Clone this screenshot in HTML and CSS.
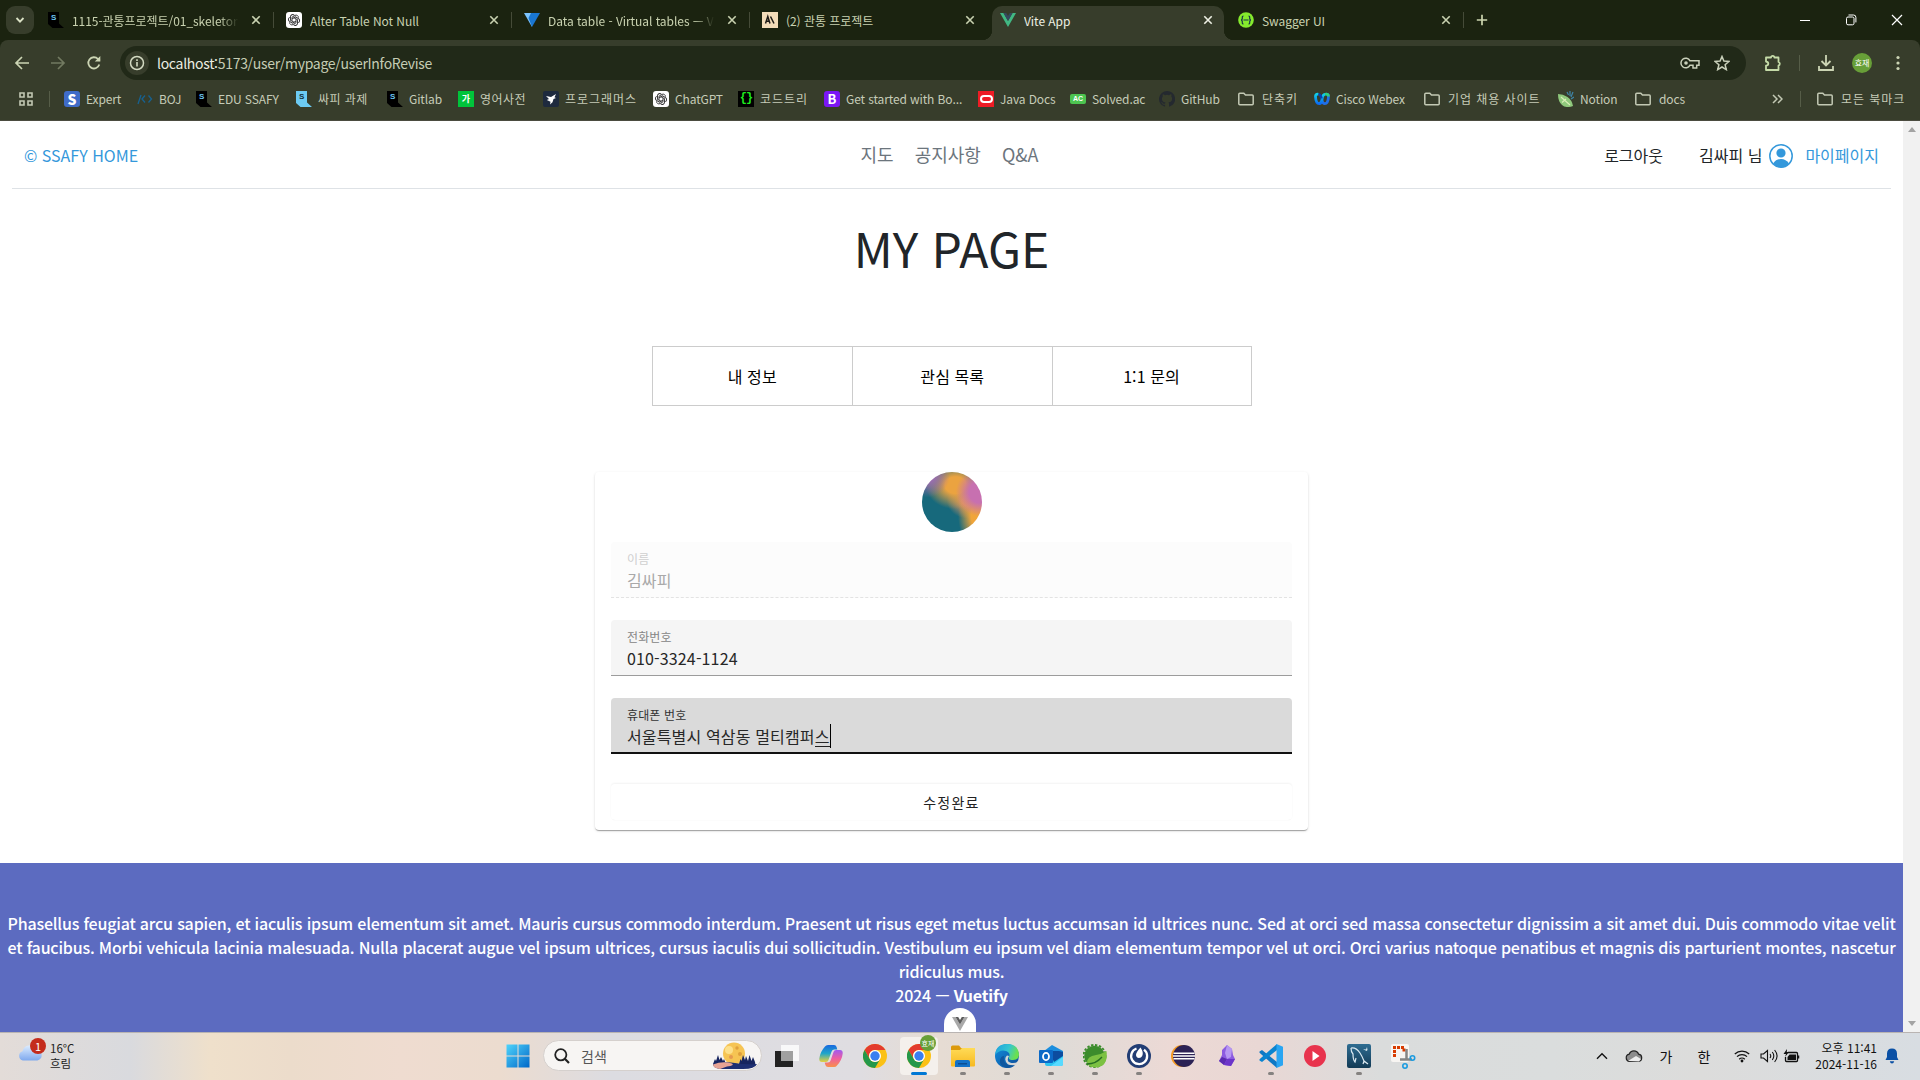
FILE: index.html
```html
<!DOCTYPE html>
<html lang="ko">
<head>
<meta charset="utf-8">
<title>Vite App</title>
<link rel="stylesheet" href="styles.css">
</head>
<body>
<svg class="defs" width="0" height="0">
  <defs>
    <linearGradient id="gWin" x1="0" y1="0" x2="1" y2="1"><stop offset="0" stop-color="#4fd4fb"/><stop offset="1" stop-color="#0067c8"/></linearGradient>
    <linearGradient id="gEdge" x1="0" y1="0" x2="1" y2="0.3"><stop offset="0" stop-color="#1f9fe0"/><stop offset="0.6" stop-color="#35c6d0"/><stop offset="1" stop-color="#6be04f"/></linearGradient>
    <linearGradient id="gEdge2" x1="0" y1="0" x2="1" y2="1"><stop offset="0" stop-color="#1290e0"/><stop offset="1" stop-color="#0c4a96"/></linearGradient>
    <linearGradient id="gCopA" x1="0" y1="0" x2="0" y2="1"><stop offset="0" stop-color="#1768e0"/><stop offset="0.5" stop-color="#20a6c8"/><stop offset="1" stop-color="#e8d03c"/></linearGradient>
    <linearGradient id="gCopB" x1="0" y1="0" x2="0" y2="1"><stop offset="0" stop-color="#a05af0"/><stop offset="0.5" stop-color="#ee5fa0"/><stop offset="1" stop-color="#f9904a"/></linearGradient>
    <linearGradient id="gFold" x1="0" y1="0" x2="0" y2="1"><stop offset="0" stop-color="#ffdb57"/><stop offset="1" stop-color="#f7b921"/></linearGradient>
    <linearGradient id="gSql" x1="0" y1="0" x2="0" y2="1"><stop offset="0" stop-color="#2f6d92"/><stop offset="1" stop-color="#123a55"/></linearGradient>
    <linearGradient id="gCloud" x1="0" y1="0" x2="0" y2="1"><stop offset="0" stop-color="#dcecff"/><stop offset="1" stop-color="#7fa9ee"/></linearGradient>
    <linearGradient id="gWebex" x1="0" y1="0" x2="0" y2="1"><stop offset="0" stop-color="#10d0e8"/><stop offset="1" stop-color="#0a6cf5"/></linearGradient>
    <symbol id="x" viewBox="0 0 10 10"><path d="M1.3 1.3l7.4 7.4M8.7 1.3L1.3 8.7" stroke="currentColor" stroke-width="1.6" fill="none"/></symbol>
    <symbol id="ssafy" viewBox="0 0 16 16"><path d="M0 0h11v11.5L16 16H4.5L0 12z" fill="currentColor"/></symbol>
    <symbol id="gpt" viewBox="0 0 16 16"><rect width="16" height="16" rx="3" fill="#fff"/><g fill="none" stroke="#333" stroke-width="0.95"><path id="petal" d="M6 8.9V5.2L9 3.4a2.3 2.3 0 0 1 3.4 2.3"/><use href="#petal" transform="rotate(60 8 8)"/><use href="#petal" transform="rotate(120 8 8)"/><use href="#petal" transform="rotate(180 8 8)"/><use href="#petal" transform="rotate(240 8 8)"/><use href="#petal" transform="rotate(300 8 8)"/></g></symbol>
    <symbol id="folder" viewBox="0 0 16 16"><path d="M.8 3.2q0-1 1-1h4l1.7 1.9h6.700q1 0 1 1v7.700q0 1-1 1H1.800q-1 0-1-1z" fill="none" stroke="#c3c9b4" stroke-width="1.5"/></symbol>
    <symbol id="chrome" viewBox="0 0 24 24"><circle cx="12" cy="12" r="12" fill="#fbc116"/><path d="M1.600 6A12 12 0 0 1 22.400 6H12A6 6 0 0 0 6.800 15z" fill="#e33b2e"/><path d="M1.600 6A12 12 0 0 0 12 24L17.200 15A6 6 0 0 1 6.800 15z" fill="#24984a"/><circle cx="12" cy="12" r="6" fill="#fff"/><circle cx="12" cy="12" r="4.700" fill="#3a7ff0"/></symbol>
  </defs>
</svg>

<header class="browser">
  <div class="tabstrip">
    <button class="tab-search"><svg width="10" height="8" viewBox="0 0 10 8"><path d="M1.500 2l3.500 3.600L8.500 2" fill="none" stroke="#dbe2c6" stroke-width="1.800"/></svg></button>
    <div class="tab"><i class="fav ssafy dark"><svg><use href="#ssafy"/></svg><b>S</b></i><span class="ttl fade">1115-관통프로젝트/01_skeleton</span><svg class="x"><use href="#x"/></svg></div>
    <div class="tab"><svg class="fav"><use href="#gpt"/></svg><span class="ttl">Alter Table Not Null</span><svg class="x"><use href="#x"/></svg></div>
    <div class="tab"><svg class="fav" viewBox="0 0 16 16"><path d="M0 1h8v14z" fill="#7cc4ff"/><path d="M16 1H7l-2.500 5L8 15z" fill="#1976d2"/></svg><span class="ttl fade">Data table - Virtual tables — V</span><svg class="x"><use href="#x"/></svg></div>
    <div class="tab last"><i class="fav sand"><svg viewBox="0 0 16 16"><path d="M3.500 11.500L5.800 4.500l2.200 7M4.500 9.200h3M8.500 4.500l3.500 7" fill="none" stroke="#1d1a16" stroke-width="1.500"/></svg></i><span class="ttl">(2) 관통 프로젝트</span><svg class="x"><use href="#x"/></svg></div>
    <div class="tab active"><svg class="fav" viewBox="0 0 16 16"><path d="M0 1h3.500L8 9l4.500-8H16L8 15z" fill="#41b883"/><path d="M3.500 1h2.700L8 4l1.800-3h2.700L8 9z" fill="#35495e"/></svg><span class="ttl">Vite App</span><svg class="x"><use href="#x"/></svg></div>
    <div class="tab"><svg class="fav" viewBox="0 0 16 16"><circle cx="8" cy="8" r="7.800" fill="#85ea2d"/><path d="M5.500 4q-1.300 0-1.200 1.500Q4.400 8 3 8q1.400 0 1.300 2.500Q4.200 12 5.500 12M10.500 4q1.300 0 1.200 1.500Q11.600 8 13 8q-1.400 0-1.300 2.500.1 1.500-1.200 1.500M5.500 8h5" fill="none" stroke="#173647" stroke-width="1.200"/></svg><span class="ttl">Swagger UI</span><svg class="x"><use href="#x"/></svg></div>
    <svg class="plus" width="12" height="12" viewBox="0 0 12 12"><path d="M6 .8v10.400M.8 6h10.400" stroke="#ccd5ae" stroke-width="1.700"/></svg>
    <div class="winctl">
      <svg width="12" height="12" viewBox="0 0 12 12"><path d="M1 6.500h10" stroke="#fff"/></svg>
      <svg width="12" height="12" viewBox="0 0 12 12"><rect x="1.500" y="3" width="7.500" height="7.800" rx="1.500" fill="none" stroke="#fff"/><path d="M3.500 1h5q2.400 0 2.400 2.400v5" fill="none" stroke="#fff"/></svg>
      <svg width="12" height="12" viewBox="0 0 12 12"><path d="M1 1l10 10M11 1L1 11" stroke="#fff" stroke-width="1.200"/></svg>
    </div>
  </div>

  <div class="toolbar">
    <div class="nav-btns">
      <svg width="16" height="16" viewBox="0 0 16 16"><path d="M15 8H2.500M8 2L2 8l6 6" fill="none" stroke="#ccd5b4" stroke-width="1.700"/></svg>
      <svg width="16" height="16" viewBox="0 0 16 16"><path d="M1 8h12.500M8 2l6 6-6 6" fill="none" stroke="#727a61" stroke-width="1.700"/></svg>
      <svg width="16" height="16" viewBox="0 0 16 16"><path d="M13.300 9.500A5.600 5.600 0 1 1 12 4L13.700 5.700" fill="none" stroke="#ccd5b4" stroke-width="1.800"/><path d="M14.300 1v5.500H8.800z" fill="#ccd5b4"/></svg>
    </div>
    <div class="omnibox">
      <i class="info"><svg width="16" height="16" viewBox="0 0 16 16"><circle cx="8" cy="8" r="6.500" fill="none" stroke="#d3dac2" stroke-width="1.500"/><path d="M8 7v4.500M8 4.300v1.600" stroke="#d3dac2" stroke-width="1.600"/></svg></i>
      <span class="url"><b>localhost:</b>5173/user/mypage/userInfoRevise</span>
      <svg class="key" width="20" height="14" viewBox="0 0 20 14"><path d="M10 4.800A4.800 4.800 0 1 0 10 9.200h3V12h3.700V9.200H19V4.800z" fill="none" stroke="#c9d0ba" stroke-width="1.500"/><circle cx="6" cy="7" r="1.800" fill="#c9d0ba"/></svg>
      <svg width="16" height="16" viewBox="0 0 16 16"><path d="M8 1.500l1.900 4.600 5 .4-3.800 3.200 1.200 4.900L8 12l-4.300 2.600 1.200-4.900L1.100 6.500l5-.4z" fill="none" stroke="#c9d0ba" stroke-width="1.500"/></svg>
    </div>
    <svg class="puzzle" width="18" height="18" viewBox="0 0 18 18"><path d="M2 3.500h5a1.700 1.700 0 0 1 3.400 0H14.500V8a1.900 1.900 0 0 1 0 3.600V16H2v-4.300q2.300-.3 2.300-2T2 7.500z" fill="none" stroke="#c5dba8" stroke-width="1.800" stroke-linejoin="round"/></svg>
    <i class="bar"></i>
    <svg class="dl" width="16" height="18" viewBox="0 0 16 18"><path d="M8 1v10M3.500 7L8 11.500 12.500 7M1 12v4h14v-4" fill="none" stroke="#ccd5b4" stroke-width="1.800"/></svg>
    <span class="profile">효재</span>
    <svg class="dots" width="4" height="16" viewBox="0 0 4 16"><g fill="#ccd5b4"><circle cx="2" cy="2.500" r="1.600"/><circle cx="2" cy="8" r="1.600"/><circle cx="2" cy="13.500" r="1.600"/></g></svg>
  </div>

  <nav class="bookmarks">
    <svg width="14" height="14" viewBox="0 0 14 14"><path d="M1 1h4v4H1zM9 1h4v4H9zM1 9h4v4H1zM9 9h4v4H9z" fill="none" stroke="#c3c9b4" stroke-width="1.600"/></svg>
    <i class="bar"></i>
    <a><i class="ic blue">S</i>Expert</a>
    <a><svg class="ic" viewBox="0 0 16 16"><path d="M4 4L1 13M8 4.500L5 8l3 3.500M11.500 4.500l3 3.500-3 3.500" fill="none" stroke="#17618f" stroke-width="1.300"/></svg>BOJ</a>
    <a><i class="ic ssafy dark"><svg><use href="#ssafy"/></svg><b>S</b></i>EDU SSAFY</a>
    <a class="ko"><i class="ic ssafy light"><svg><use href="#ssafy"/></svg><b>S</b></i>싸피 과제</a>
    <a><i class="ic ssafy dark"><svg><use href="#ssafy"/></svg><b>S</b></i>Gitlab</a>
    <a class="ko"><i class="ic green">가</i>영어사전</a>
    <a class="ko wide"><svg class="ic" viewBox="0 0 16 16"><rect width="16" height="16" rx="2" fill="#1e2a3e"/><path d="M3 5l5 1 5-3-1.500 3.200 1.500.8-2.500 1-1 3.200L7 13.500l.5-2.700L3.800 9 6 8z" fill="#fff"/></svg>프로그래머스</a>
    <a><svg class="ic"><use href="#gpt"/></svg>ChatGPT</a>
    <a class="ko wide"><i class="ic code">{}</i>코드트리</a>
    <a><i class="ic boot">B</i>Get started with Bo...</a>
    <a><i class="ic java"><u></u></i>Java Docs</a>
    <a><i class="ic"><em>AC</em></i>Solved.ac</a>
    <a><svg class="ic" viewBox="0 0 16 16"><path fill="#24292f" d="M8 0a8 8 0 0 0-2.530 15.590c.4.070.550-.17.550-.38v-1.490c-2.230.48-2.700-.94-2.700-.94-.36-.93-.89-1.170-.89-1.170-.73-.5.050-.49.050-.49.810.06 1.230.83 1.230.83.720 1.230 1.890.87 2.350.67.070-.52.280-.87.510-1.070-1.780-.2-3.640-.89-3.640-3.950 0-.88.310-1.590.820-2.150-.08-.2-.36-1.020.080-2.120 0 0 .67-.22 2.200.82a7.500 7.500 0 0 1 4 0c1.530-1.040 2.200-.82 2.200-.82.440 1.100.160 1.920.080 2.120.510.560.820 1.270.820 2.150 0 3.070-1.870 3.750-3.650 3.950.290.250.540.730.540 1.480v2.200c0 .21.150.46.550.38A8 8 0 0 0 8 0z"/></svg>GitHub</a>
    <a class="fo ko wide"><svg class="ic"><use href="#folder"/></svg>단축키</a>
    <a><svg class="ic" viewBox="0 0 16 16"><path d="M11.500 3.300q3-.8 3 2.200-.3 7-3.700 7.200-2 0-2.800-3.200" fill="none" stroke="#1f6fe8" stroke-width="2.800"/><path d="M11 3.300q3.400-1 3.500 2.200" fill="none" stroke="#2fd07a" stroke-width="2.800"/><path d="M4.500 3.300q-3.200-.5-3 2.200.3 7 3.700 7.200Q7.500 12.500 8 8.500 8.500 3.500 11 3.300" fill="none" stroke="url(#gWebex)" stroke-width="2.800"/><path d="M4.500 3.300q2 .2 3 4.200" fill="none" stroke="#0a3fb0" stroke-width="2.600"/></svg>Cisco Webex</a>
    <a class="fo ko wide"><svg class="ic"><use href="#folder"/></svg>기업 채용 사이트</a>
    <a><svg class="ic" viewBox="0 0 16 16"><path d="M0 3q5 0 9.500 3t5.500 9q-7 2.500-11-1T0 3z" fill="#8fc97c"/><path d="M3 6l9 8M4 11.500l4-3.500" stroke="#d9efb8" stroke-width="1.100" fill="none"/><path d="M9 1l1.500 3M12 0v5M15 1l-2 5M16 6l-3 2" stroke="#3f86a8" stroke-width="1.200"/></svg>Notion</a>
    <a class="fo"><svg class="ic"><use href="#folder"/></svg>docs</a>
    <svg width="11" height="10" viewBox="0 0 11 10"><path d="M1 1l4 4-4 4M6 1l4 4-4 4" fill="none" stroke="#c3c9b4" stroke-width="1.500"/></svg>
    <i class="bar"></i>
    <a class="fo ko wide"><svg class="ic"><use href="#folder"/></svg>모든 북마크</a>
  </nav>
</header>

<div class="viewport">
  <div class="page">
    <div class="site-head">
      <a class="brand">© SSAFY HOME</a>
      <nav class="menu"><a>지도</a><a>공지사항</a><a>Q&amp;A</a></nav>
      <div class="user">
        <span class="logout">로그아웃</span><span>김싸피 님</span>
        <svg width="24" height="24" viewBox="0 0 24 24"><circle cx="12" cy="12" r="11.200" fill="#fff" stroke="#3498db" stroke-width="1.500"/><circle cx="12" cy="9" r="4.600" fill="#3498db"/><path d="M4 19.500q3-4.500 8-4.500t8 4.500Q17 23.500 12 23.500t-8-4z" fill="#3498db"/></svg>
        <a>마이페이지</a>
      </div>
    </div>
    <h1>MY PAGE</h1>
    <div class="btn-group"><button>내 정보</button><button>관심 목록</button><button>1:1 문의</button></div>
    <form class="card">
      <div class="avatar"></div>
      <label class="field disabled"><small>이름</small><span>김싸피</span></label>
      <label class="field"><small>전화번호</small><span>010-3324-1124</span></label>
      <label class="field focus"><small>휴대폰 번호</small><span>서울특별시 역삼동 멀티캠퍼<u>스</u><i class="caret"></i></span></label>
      <button class="submit">수정완료</button>
    </form>
    <footer>
      <p>Phasellus feugiat arcu sapien, et iaculis ipsum elementum sit amet. Mauris cursus commodo interdum. Praesent ut risus eget metus luctus accumsan id ultrices nunc. Sed at orci sed massa consectetur dignissim a sit amet dui. Duis commodo vitae velit<br>et faucibus. Morbi vehicula lacinia malesuada. Nulla placerat augue vel ipsum ultrices, cursus iaculis dui sollicitudin. Vestibulum eu ipsum vel diam elementum tempor vel ut orci. Orci varius natoque penatibus et magnis dis parturient montes, nascetur<br>ridiculus mus.</p>
      <p>2024 — <strong>Vuetify</strong></p>
      <div class="devtools"><svg width="16" height="14" viewBox="0 0 16 14"><path d="M0 0h3.500L8 7.500 12.500 0H16L8 14z" fill="#a9a9a9"/><path d="M3.500 0h2.700L8 3l1.800-3h2.700L8 7.500z" fill="#5c5c5c"/></svg></div>
    </footer>
  </div>
  <div class="scrollbar">
    <svg width="8" height="5" viewBox="0 0 8 5"><path d="M0 5l4-5 4 5z" fill="#a3a3a3"/></svg>
    <svg width="8" height="5" viewBox="0 0 8 5"><path d="M0 0l4 5 4-5z" fill="#a3a3a3"/></svg>
  </div>
</div>

<div class="taskbar">
  <div class="weather">
    <div class="cloud"><svg width="25" height="18" viewBox="0 0 25 18"><path d="M5 17.500a4.800 4.800 0 0 1-.5-9.300A7.500 7.500 0 0 1 18.500 6.500a5.600 5.600 0 0 1 1 11z" fill="url(#gCloud)"/></svg><b>1</b></div>
    <div class="wtext"><span>16°C</span><span>흐림</span></div>
  </div>
  <div class="apps">
    <div class="app"><svg width="24" height="24" viewBox="0 0 24 24"><path d="M.5.500h11v11H.5zM12.500.500h11v11h-11zM.5 12.500h11v11H.5zM12.500 12.500h11v11h-11z" fill="url(#gWin)"/></svg></div>
    <div class="search">
      <svg width="16" height="16" viewBox="0 0 16 16"><circle cx="6.800" cy="6.800" r="5.600" fill="none" stroke="#222" stroke-width="1.800"/><path d="M10.800 10.800L15 15" stroke="#222" stroke-width="2.200"/></svg>
      <span>검색</span>
      <svg width="44" height="27" viewBox="0 0 44 27"><circle cx="21" cy="11.500" r="11" fill="#f6c453"/><circle cx="16" cy="8" r="4" fill="#fde08a"/><circle cx="24" cy="6" r="1.700" fill="#dfa03c"/><circle cx="27" cy="12" r="2" fill="#dfa03c"/><circle cx="18" cy="15" r="2" fill="#e59a50"/><path d="M0 22l2-5 1 2 2-6 1.500 5L8 15l2 4 1-2 2 5h13l1.500-5 1 2 1.500-6 2 5 1-4 2 5 1.500-6 2 6 1.500-4 2 5 .5 3-3 1H2z" fill="#17255f"/><path d="M0 22q12-3 22-1t22 1q-2 5-14 5H7q-7-1-7-5z" fill="#1e2f72"/><path d="M0 22.500q10-4 19-1 3 2-5 3L7 27q-7-1-7-4.500z" fill="#e7a394"/></svg>
    </div>
    <div class="app"><svg width="24" height="22" viewBox="0 0 24 22"><rect y="6" width="18" height="16" fill="#222"/><rect x="6" width="18" height="16" fill="#fdfdfd" opacity=".85"/><rect x="6" y="6" width="12" height="10" fill="#a0a0a0"/></svg></div>
    <div class="app"><svg width="24" height="22" viewBox="0 0 24 22"><path d="M6 1.500Q7 0 9 0h6q2 0 2.600 2l.7 2.500h-3q-2 0-2.700 2L9.500 15q-.6 2-2.500 2H3Q0 17 .3 13.500 1 7 6 1.500z" fill="url(#gCopA)"/><path d="M18 20.500Q17 22 15 22H9q-2 0-2.600-2l-.7-2.500H9q2 0 2.600-2L14.500 7q.6-2 2.500-2h4q3 0 2.700 3.500Q23 15 18 20.500z" fill="url(#gCopB)"/></svg></div>
    <div class="app"><svg width="24" height="24"><use href="#chrome"/></svg></div>
    <div class="app current"><svg width="24" height="24"><use href="#chrome"/></svg><b>효재</b></div>
    <div class="app run"><svg width="24" height="22" viewBox="0 0 24 22"><path d="M0 2q0-1.500 1.500-1.500H8L10 3H24v5H0z" fill="#dc9a0c"/><path d="M0 5h9l2-2h13v17.500q0 1-1 1H1q-1 0-1-1z" fill="url(#gFold)"/><path d="M4 22v-5q0-2 2-2h11q2 0 2 2v5z" fill="#1272c8"/><path d="M7 18h9v1.500H7z" fill="#0b4e93"/></svg></div>
    <div class="app run"><svg width="24" height="24" viewBox="0 0 24 24"><circle cx="12" cy="12" r="12" fill="url(#gEdge2)"/><path d="M0 11Q1 0 12 0q11 0 12 10 0 6-6 6-5 0-4-3 2-4-3-6Q5 5 0 11z" fill="url(#gEdge)"/><path d="M14 12q-3 5 1 6.500 4 1.500 8-1l1 3-3 2-8-2q-5-5-1-9z" fill="#dfdcd8" opacity=".95"/><path d="M9 12q-2 11 11 9-3 3-8 3-8-2-7-8 1-4 4-4z" fill="#0f579f"/></svg></div>
    <div class="app run"><svg width="24" height="24" viewBox="0 0 24 24"><path d="M5 7l8-6 11 6v4H5z" fill="#1b8ede"/><path d="M6 8h18v12q0 2-2 2H8q-2 0-2-2z" fill="#2ac3f0"/><path d="M10 7h10l4 1v4l-9 6z" fill="#0c4c9f"/><path d="M12 22l12-9v7q0 2-2 2z" fill="#58daff"/><rect y="6" width="14" height="13" rx="1" fill="#0b69c7"/><ellipse cx="7" cy="12.500" rx="3" ry="3.600" fill="none" stroke="#fff" stroke-width="1.800"/></svg></div>
    <div class="app run"><svg width="24" height="24" viewBox="0 0 24 24"><circle cx="11.500" cy="12" r="10.300" fill="#3c8c2c"/><circle cx="11.500" cy="12" r="11" fill="none" stroke="#3c8c2c" stroke-width="2" stroke-dasharray="2.400 1.600"/><path d="M23.500 7q2 16-11 16.500Q5 23 4 19q0-7 9-8 6-1 10.500-4z" fill="#7cc142"/><path d="M4 20q9 0 15-7" fill="none" stroke="#276e23" stroke-width="1.300"/></svg></div>
    <div class="app run"><svg width="24" height="24" viewBox="0 0 24 24"><circle cx="12" cy="12" r="12" fill="#223d74"/><path d="M9.500 4.500a8 8 0 1 0 7.500 1.200" fill="none" stroke="#fff" stroke-width="2.300"/><path d="M13.500 3.500q3.500 5 1.700 8.500-1 2-3.200 2-3-.3-3-3.200 0-2.500 4.500-7.300z" fill="#fff"/></svg></div>
    <div class="app"><svg width="24" height="22" viewBox="0 0 24 22"><circle cx="11" cy="11" r="11" fill="#f59a22"/><circle cx="13" cy="11" r="11" fill="#2c2255"/><path d="M2.500 8.200h21M2 11h22M2.500 13.800h21" stroke="#fff" stroke-width="1.500"/></svg></div>
    <div class="app"><svg width="18" height="22" viewBox="0 0 18 22"><path d="M9 0l5 4 1 6 2 4-4 7-7-1-5-4 3-6V5z" fill="#8c5be0"/><path d="M9 0l5 4-1 8-4 2-2-6z" fill="#b697f2"/><path d="M4 12l5 2-3 6-5-4z" fill="#5b2bb0"/><path d="M9 14l8 0-4 7-7-1z" fill="#6c35c9"/></svg></div>
    <div class="app run"><svg width="24" height="24" viewBox="0 0 24 24"><path d="M.5 7.500L3 6l15 12v6L.5 8.800z" fill="#0f78c4"/><path d="M.5 16.500L3 18 18 6V0L.5 15.200z" fill="#0a84d0"/><path d="M17.500 0L24 2.700v18.600L17.500 24z" fill="#2aa5f2"/></svg></div>
    <div class="app"><svg width="22" height="22" viewBox="0 0 22 22"><circle cx="11" cy="11" r="11" fill="#e8334d"/><path d="M8.500 6l7 5-7 5z" fill="#fff"/></svg></div>
    <div class="app run"><svg width="24" height="24" viewBox="0 0 24 24"><rect width="24" height="24" rx="2" fill="url(#gSql)"/><path d="M4 4q5-1 9 5 2 3 4 8l4 3M4 4q0 4 2 6 0 6 2 8l1-4M17 17l-1 3" fill="none" stroke="#dceaf2" stroke-width="1.200"/><path d="M16 5l3 .5L20 3l.5 3-1 1z" fill="#dceaf2"/></svg></div>
    <div class="app"><svg width="25" height="25" viewBox="0 0 25 25"><rect y="0" width="18" height="18" rx="2" fill="#f7f5f2"/><path d="M3.500 13V3.500H13V8" fill="none" stroke="#d83b01" stroke-width="3" stroke-dasharray="3 1"/><path d="M15.500 5v11.500M9 15.500h12" stroke="#858585" stroke-width="2.500" fill="none"/><circle cx="21.500" cy="14" r="2.200" fill="none" stroke="#1a9be0" stroke-width="1.600"/><circle cx="14" cy="22" r="2.200" fill="none" stroke="#1a9be0" stroke-width="1.600"/></svg></div>
  </div>
  <div class="tray">
    <svg width="12" height="8" viewBox="0 0 12 8"><path d="M1 6.800l5-5 5 5" fill="none" stroke="#111" stroke-width="1.400"/></svg>
    <svg width="18" height="14" viewBox="0 0 18 14"><path d="M4.500 12.500a3.700 3.700 0 0 1-.3-7.300 5 5 0 0 1 9.400 0 3.700 3.700 0 0 1 0 7.300z" fill="#8d8d8d" stroke="#222" stroke-width="1.200"/><path d="M3 12l8-5 5 3-2 2.500z" fill="#eee"/></svg>
    <span>가</span><span>한</span>
    <svg width="16" height="14" viewBox="0 0 16 14"><path d="M.8 5a10.500 10.500 0 0 1 14.400 0M3 7.700a7 7 0 0 1 10 0M5.200 10.300a4 4 0 0 1 5.600 0" fill="none" stroke="#111" stroke-width="1.200"/><circle cx="8" cy="12" r="1.400" fill="#111"/></svg>
    <svg width="18" height="14" viewBox="0 0 18 14"><path d="M1 5v4h2.500L7.500 12.500v-11L3.500 5zM10 5q1.500 2 0 4M12.300 3q3 4 0 8M14.600 1q5 6 0 12" fill="none" stroke="#111" stroke-width="1.100"/></svg>
    <svg width="17" height="14" viewBox="0 0 17 14"><path d="M5 3.500h8.500q1 0 1 1v7q0 1-1 1H3.500q-1 0-1-1V8" fill="none" stroke="#111" stroke-width="1.300"/><path d="M6.500 5.500H13V11H4.500V8z" fill="#111"/><path d="M15.500 6.500v3" stroke="#111" stroke-width="1.500"/><path d="M4 0L.5 5H3L2 8l4-5H3.800z" fill="#111"/></svg>
    <div class="clock"><span>오후 11:41</span><span>2024-11-16</span></div>
    <svg class="bell" width="14" height="16" viewBox="0 0 14 16"><path d="M7 .5q4.800 0 5 5V9l1.500 3H.5L2 9V5.500q.2-5 5-5zM4.800 13.300h4.400Q8.700 15.500 7 15.500t-2.200-2.200z" fill="#0a50a5"/></svg>
  </div>
</div>
</body>
</html>
```
FILE: styles.css
```css
* { box-sizing: border-box; }
body {
  margin: 0;
  width: 1920px;
  height: 1080px;
  overflow: hidden;
  display: flex;
  flex-direction: column;
  font-family: "Noto Sans CJK KR", "Noto Sans", sans-serif;
  background: #fff;
}
.defs { position: absolute; }
svg { flex: none; display: block; }
button { font: inherit; border: 0; background: none; padding: 0; color: inherit; }
i, em { font-style: normal; }

/* browser chrome */
.browser {
  height: 121px;
  flex: none;
  background: #1b2310;
  color: #c9d2b0;
  font-size: 12px;
  border-bottom: 1px solid #4b4c40;
}
.tabstrip { height: 40px; display: flex; align-items: center; }
.tab-search {
  width: 28px; height: 28px; margin: 0 2px 0 6px;
  border-radius: 9px; background: #373d2b;
  display: flex; align-items: center; justify-content: center;
}
.tab {
  width: 238px; height: 40px; padding: 0 13px 0 12px;
  display: flex; align-items: center; position: relative;
}
.tab:not(.active):not(.last)::after {
  content: ""; position: absolute; right: 0; top: 12px;
  width: 1px; height: 16px; background: #454b38;
}
.fav, .ic { width: 16px; height: 16px; flex: none; display: block; }
.ttl { width: 168px; margin-left: 8px; overflow: hidden; white-space: nowrap; line-height: 20px; padding-top: 1px; letter-spacing: -.05px; }
.fade { -webkit-mask-image: linear-gradient(90deg, #000 88%, transparent 99%); mask-image: linear-gradient(90deg, #000 88%, transparent 99%); }
.tab .x { width: 10px; height: 10px; margin-left: auto; }
.tab.active {
  background: #373d2b; height: 34px; margin: 6px 2px 0 4px; width: 232px;
  padding: 0 11px 6px 8px; border-radius: 10px 10px 0 0; color: #eef0e4;
}
.tab.active::before, .tab.active::after {
  content: ""; position: absolute; bottom: 0; width: 10px; height: 10px;
}
.tab.active::before { left: -10px; background: radial-gradient(circle at 0 0, transparent 10px, #373d2b 10.500px); }
.tab.active::after { right: -10px; background: radial-gradient(circle at 100% 0, transparent 10px, #373d2b 10.500px); }
.plus { margin-left: 12px; }
.winctl { margin-left: auto; display: flex; gap: 34px; padding-right: 17px; }
.sand { background: #f3dcb9; }
.ssafy { position: relative; }
.ssafy svg { width: 16px; height: 16px; }
.ssafy b { position: absolute; left: 3px; top: 1px; font: bold 8px/10px "Liberation Sans", sans-serif; }
.dark { color: #000; }
.dark b { color: #6cc7f0; }
.light { color: #6ccbf3; }
.light b { color: #12303c; }

.toolbar {
  height: 40px; display: flex; align-items: center;
  background: #373d2b; border-radius: 8px 8px 0 0; padding-top: 6px;
}
.nav-btns { display: flex; gap: 20px; width: 120px; padding-left: 14px; }
.omnibox {
  width: 1626px; height: 34px; border-radius: 17px; background: #212918;
  display: flex; align-items: center; padding: 0 16px 0 5px;
}
.info {
  width: 24px; height: 24px; border-radius: 50%; background: #373d2b;
  display: flex; align-items: center; justify-content: center;
}
.url { font-size: 14px; margin-left: 8px; line-height: 20px; flex: 1; color: #c5ccb4; letter-spacing: -.3px; }
.url b { font-weight: 400; color: #eceee2; }
.key { margin-right: 14px; }
.puzzle { margin-left: 18px; }
.bar { width: 1px; height: 16px; background: #565d48; }
.toolbar > .bar { margin-left: 17px; }
.dl { margin-left: 18px; }
.profile {
  width: 20px; height: 20px; margin-left: 18px; border-radius: 50%;
  background: #689f38; color: #fff; font-size: 8px; line-height: 20px; text-align: center;
}
.dots { margin-left: 24px; }

.bookmarks {
  height: 40px; background: #373d2b; display: grid; align-items: center;
  padding: 0 0 2px 19px; color: #c6ccb8; letter-spacing: -.12px;
  grid-template-columns: 30px 15px 73px 59px 100px 91px 71px 85px 110px 85px 86px 154px 92px 89px 79px 76px 110px 134px 77px 137px 28px 17px 100px;
}
.bookmarks a { display: flex; align-items: center; gap: 6px; white-space: nowrap; line-height: 18px; }
.bookmarks a.fo { gap: 8px; }
.bookmarks .ko { letter-spacing: .45px; }
.bookmarks .wide { letter-spacing: .95px; }
.ic { line-height: 16px; text-align: center; color: #fff; letter-spacing: 0; }
.blue { background: #3f6cc8; border-radius: 3px; font-weight: 900; font-size: 14px; }
.green { background: #00c43b; font-size: 9px; font-weight: 700; }
.code { background: #000; color: #1eea1e; font: bold 12px/15px "Liberation Mono", monospace; letter-spacing: -1px; }
.boot { background: #7a16f5; border-radius: 3px; font-weight: 700; font-size: 13px; }
.java { background: #ee1c25; padding: 4px 1.500px; }
.java u { display: block; height: 8px; border: 2px solid #fff; border-radius: 4px; }
.ic.ssafy { color: #000; }
.ic.ssafy.light { color: #6ccbf3; }
.ic em { display: block; margin-top: 3px; height: 10px; border-radius: 2px; background: #4cc450; font: bold 7px/10px "Liberation Sans", sans-serif; }

/* page */
.viewport { height: 911px; flex: none; display: flex; overflow: hidden; }
.page { width: 1903px; display: flex; flex-direction: column; align-items: center; color: #212529; }
.scrollbar {
  width: 17px; background: #f1f1f1; display: flex; flex-direction: column;
  justify-content: space-between; align-items: center; padding: 6px 0;
}
.site-head {
  width: 1879px; height: 68px; border-bottom: 1px solid #dee2e6; padding: 0 12px;
  display: grid; grid-template-columns: 1fr auto 1fr; align-items: center;
}
.brand, .user a { color: #3498db; }
.brand { line-height: 24px; padding-top: 1px; }
.menu { display: flex; gap: 21px; font-size: 18px; color: #6c757d; line-height: 26px; margin-right: 4px; padding-bottom: 2px; }
.user { display: flex; align-items: center; justify-content: flex-end; line-height: 24px; padding-top: 1px; }
.logout { margin-right: 36px; }
.user svg { margin: 2px 12px 0 7px; }
h1 { font-size: 48px; line-height: 58px; font-weight: 400; margin: 29px 0 0; }
.btn-group {
  width: 600px; height: 60px; margin-top: 70px; display: grid;
  grid-template-columns: 199.500px 199.500px 1fr; border: 1px solid #ccc;
}
.btn-group button { color: #000; font-size: 16px; letter-spacing: .1px; }
.btn-group button + button { border-left: 1px solid #ccc; }
.card {
  width: 713px; height: 358px; margin-top: 66px; padding: 0 16px; border-radius: 4px;
  box-shadow: 0 2px 1px -1px rgba(0,0,0,.2), 0 1px 1px rgba(0,0,0,.14), 0 1px 3px rgba(0,0,0,.12);
  display: flex; flex-direction: column;
}
.avatar {
  width: 60px; height: 60px; border-radius: 50%; align-self: center; margin-bottom: 10px;
  background:
    radial-gradient(circle at 96% 34%, #c770b0 0 15%, rgba(199,112,176,0) 34%),
    radial-gradient(circle at 10% 6%, #9a6eae 0 8%, rgba(138,110,168,0) 28%),
    radial-gradient(ellipse 30px 24px at 56% 22%, #eba340 0 35%, rgba(235,163,64,0) 100%),
    radial-gradient(ellipse 24px 36px at 100% 72%, #f0a53a 0 45%, rgba(240,165,58,0) 100%),
    radial-gradient(ellipse 22px 18px at 78% 48%, #dd9560 0 30%, rgba(221,149,96,0) 100%),
    #17697c;
}
.field {
  height: 56px; margin-bottom: 22px; padding: 7px 16px 0; background: #f5f5f5;
  border-radius: 4px 4px 0 0; border-bottom: 1px solid #9c9c9c;
  display: flex; flex-direction: column; color: #272727; letter-spacing: .144px;
}
.field small { font-size: 12px; line-height: 19px; color: #858585; }
.field span { line-height: 24px; display: flex; height: 26px; }
.field.disabled { background: #fcfcfc; border-bottom: 1px dashed #e3e3e3; color: #a9a9a9; }
.field.disabled small { color: #cfcfcf; }
.field.focus { background: #dadada; border-bottom: 2px solid #111; }
.field.focus small { color: #333; }
.field u { text-decoration: none; border-bottom: 1px solid #222; height: 23px; }
.caret { width: 1px; height: 24px; background: #000; }
.submit {
  height: 36px; margin-top: 8px; border-radius: 4px; font-size: 14px; letter-spacing: 1.250px;
  color: #222; box-shadow: 0 -1px 2px rgba(0,0,0,.05), 0 1px 1px -1px rgba(0,0,0,.15);
}
footer {
  width: 100%; margin-top: 33px; height: 169px; background: #5c6bc0; color: #fff; flex: none;
  text-align: center; font-weight: 500; line-height: 24px; padding-top: 48px;
  display: flex; flex-direction: column; align-items: center;
}
p { margin: 0; white-space: nowrap; letter-spacing: -.19px; }
.devtools {
  position: relative; left: 8px; top: 1px; width: 32px; height: 32px; flex: none; border-radius: 16px 16px 0 0;
  background: #fff; display: flex; justify-content: center; padding-top: 9px;
}

/* taskbar */
.taskbar {
  height: 48px; border-top: 1px solid #b9b4b2; flex: none; display: flex;
  background: linear-gradient(90deg, #e3dcd8 0, #d9dade 130px, #efe0cb 210px, #ecdccb 290px, #efdcd0 400px, #ecdccf 500px, #dcdce1 610px, #dfdde1 860px, #e6dcd3 940px, #dfdbd7 1060px, #ecd9d5 1170px, #e9d7d4 1260px, #dadcdc 1380px, #dadddd 1550px, #dcdcdb 1700px, #d8dde2 1920px);
}
.weather { width: 496px; display: flex; padding-left: 18px; color: #222; font-size: 12px; }
.cloud { position: relative; width: 32px; padding-top: 10px; }
.cloud b {
  position: absolute; left: 12px; top: 5px; width: 16px; height: 16px; border-radius: 50%;
  background: #c42b1c; color: #fff; font-weight: 400; line-height: 16px; text-align: center; font-size: 11px;
}
.wtext { display: flex; flex-direction: column; line-height: 15px; padding-top: 8px; font-size: 11.500px; }
.apps { display: flex; width: 1106px; }
.app { width: 44px; display: flex; align-items: center; justify-content: center; position: relative; flex: none; padding-bottom: 1px; }
.search {
  width: 219px; height: 31px; margin: 7px 3px 0 3px; border-radius: 16px; background: #f7f5f3;
  border: 1px solid #d5d0cd; display: flex; align-items: center; padding: 0 4px 0 10px; font-size: 14px; color: #555;
}
.search span { flex: 1; margin-left: 11px; line-height: 20px; }
.run::after, .current::after {
  content: ""; position: absolute; bottom: 5px; width: 6px; height: 3px; border-radius: 2px; background: #858280;
}
.current::after { width: 16px; background: #0078d4; }
.current::before {
  content: ""; position: absolute; left: 3px; top: 4px; width: 38px; height: 38px; border-radius: 4px; background: #f4f0ec;
}
.current svg { position: relative; }
.current b {
  position: absolute; left: 23px; top: 2px; width: 16px; height: 16px; border-radius: 50%;
  background: #689f38; color: #fff; font-size: 7px; font-weight: 400; line-height: 16px; text-align: center;
}
.tray {
  display: grid; align-items: center; justify-items: center; color: #111; font-size: 14px; flex: none; margin-left: -16px;
  grid-template-columns: 32px 32px 32px 44px 32px 22px 22px 75px 29px; padding-bottom: 2px;
}
.clock { display: flex; flex-direction: column; align-items: flex-end; font-size: 12px; line-height: 16px; letter-spacing: 0; justify-self: end; white-space: nowrap; }
```
